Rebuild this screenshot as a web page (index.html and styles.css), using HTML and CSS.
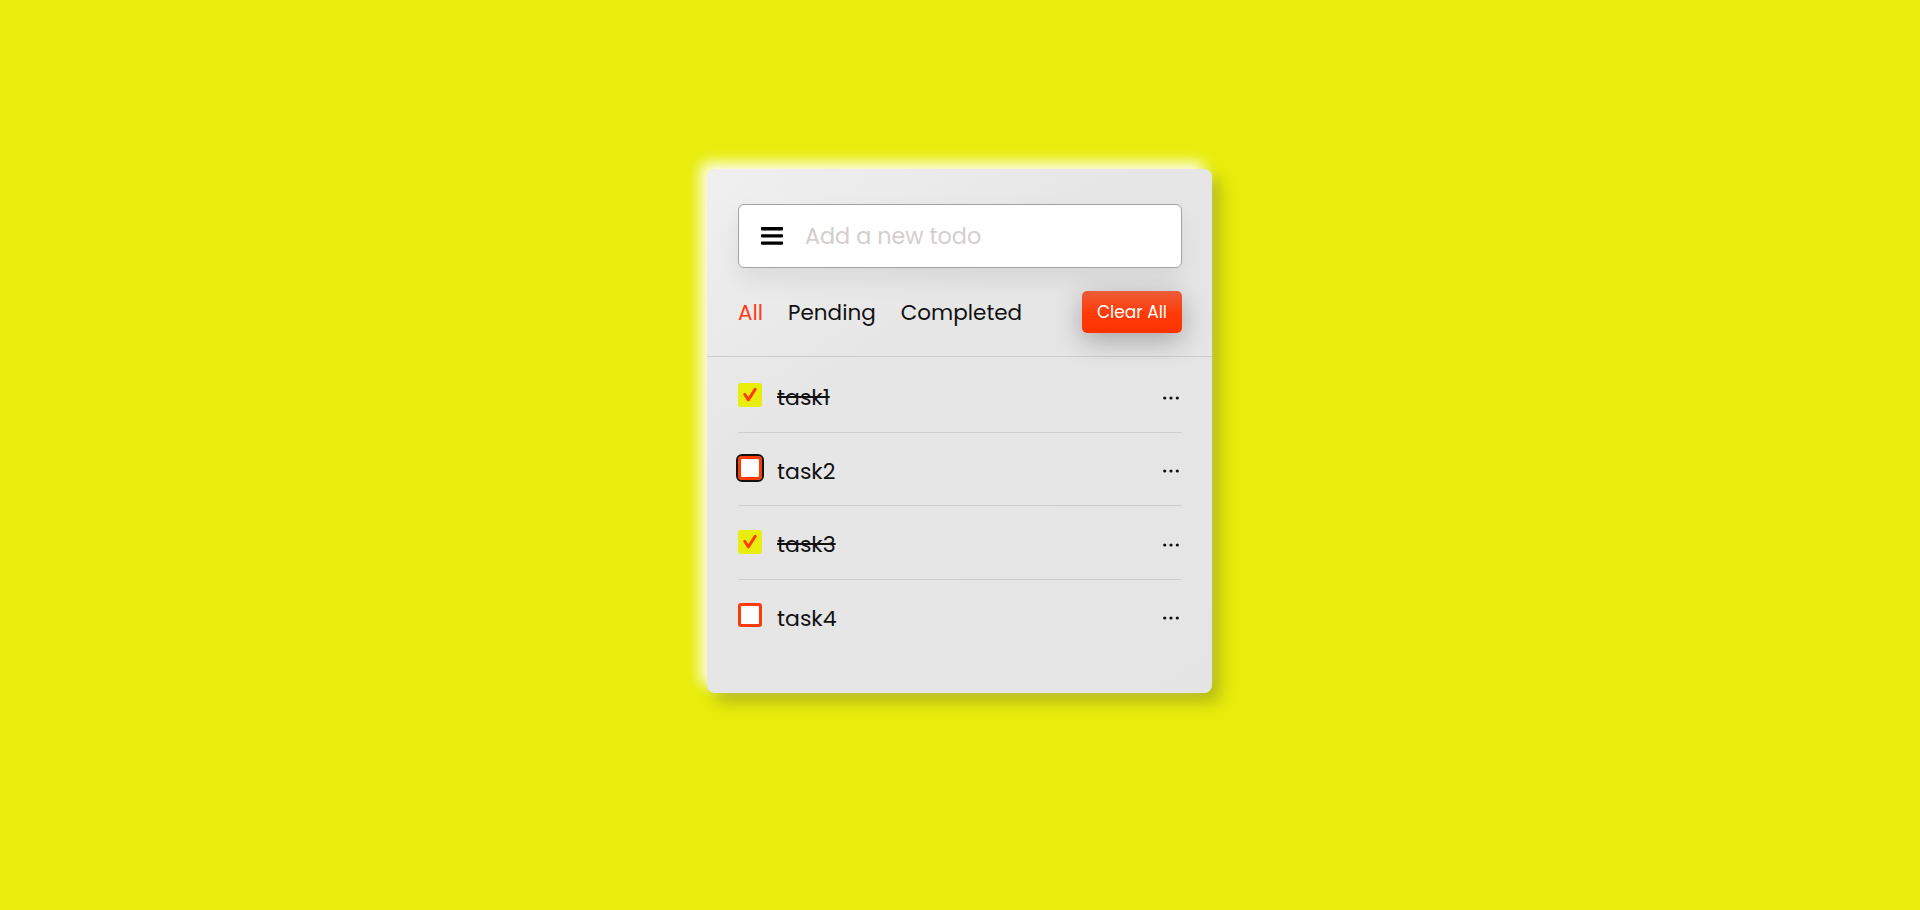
FILE: index.html
```html
<!DOCTYPE html>
<html lang="en">
<head>
<meta charset="utf-8">
<title>Todo App</title>
<link rel="stylesheet" href="styles.css">
</head>
<body>
<div class="card">
  <div class="task-input">
    <svg class="bars" width="22" height="18" viewBox="0 0 22 18" aria-hidden="true">
      <rect x="0" y="0" width="22" height="3.4" rx="0.8"/>
      <rect x="0" y="7.2" width="22" height="3.4" rx="0.8"/>
      <rect x="0" y="14.4" width="22" height="3.4" rx="0.8"/>
    </svg>
    <input type="text" placeholder="Add a new todo">
  </div>
  <div class="controls">
    <div class="filters">
      <span class="filter active">All</span>
      <span class="filter">Pending</span>
      <span class="filter">Completed</span>
    </div>
    <button class="clear-btn">Clear All</button>
  </div>
  <ul class="task-box">
    <li class="task">
      <span class="check checked"><svg width="24" height="24" viewBox="0 0 25 25"><polyline points="7,11.8 10.8,17.6 18,6.4"/></svg></span>
      <span class="name done">task1</span>
      <svg class="dots" width="16" height="4" viewBox="0 0 16 4"><circle cx="1.7" cy="2" r="1.6"/><circle cx="8" cy="2" r="1.6"/><circle cx="14.3" cy="2" r="1.6"/></svg>
    </li>
    <li class="task">
      <span class="check focused"></span>
      <span class="name">task2</span>
      <svg class="dots" width="16" height="4" viewBox="0 0 16 4"><circle cx="1.7" cy="2" r="1.6"/><circle cx="8" cy="2" r="1.6"/><circle cx="14.3" cy="2" r="1.6"/></svg>
    </li>
    <li class="task">
      <span class="check checked"><svg width="24" height="24" viewBox="0 0 25 25"><polyline points="7,11.8 10.8,17.6 18,6.4"/></svg></span>
      <span class="name done">task3</span>
      <svg class="dots" width="16" height="4" viewBox="0 0 16 4"><circle cx="1.7" cy="2" r="1.6"/><circle cx="8" cy="2" r="1.6"/><circle cx="14.3" cy="2" r="1.6"/></svg>
    </li>
    <li class="task">
      <span class="check"></span>
      <span class="name">task4</span>
      <svg class="dots" width="16" height="4" viewBox="0 0 16 4"><circle cx="1.7" cy="2" r="1.6"/><circle cx="8" cy="2" r="1.6"/><circle cx="14.3" cy="2" r="1.6"/></svg>
    </li>
  </ul>
</div>
</body>
</html>
```
FILE: styles.css
```css
* {
  box-sizing: border-box;
}

html, body {
  margin: 0;
  padding: 0;
}

body {
  min-height: 910px;
  background: #e8ed0b;
  padding-top: 169px;
  font-family: "Poppins", "Open Sans", sans-serif;
  color: #111;
}

.card {
  width: 505px;
  margin: 0 auto 0 707px;
  padding: 35px 0 41px;
  border-radius: 8px;
  background: linear-gradient(145deg, #f0f0f0 0%, #e6e6e6 35%, #e5e5e5 100%);
  box-shadow: -7px -7px 14px rgba(255, 255, 255, 0.9), 8px 9px 16px rgba(60, 60, 50, 0.3);
}

.task-input {
  margin: 0 30px 0 31px;
  height: 64px;
  display: flex;
  align-items: center;
  background: #fff;
  border: 1px solid #a2a2a2;
  border-radius: 6px;
  padding-left: 22px;
  box-shadow: 0 12px 24px rgba(0, 0, 0, 0.07);
}

.bars {
  fill: #000;
  flex: none;
}

.task-input input {
  flex: 1;
  min-width: 0;
  border: none;
  outline: none;
  background: transparent;
  margin-left: 22px;
  font-family: inherit;
  font-size: 22.3px;
  color: #111;
  padding: 0;
}

.task-input input::placeholder {
  color: #d4cece;
}

.controls {
  display: flex;
  align-items: center;
  padding: 23px 30px 23px 31px;
  border-bottom: 1px solid #cdcdcd;
}

.filters {
  display: flex;
  align-items: center;
  gap: 25px;
  padding-top: 1px;
}

.filter {
  font-size: 21.5px;
  color: #111;
  line-height: 1;
}

.filter.active {
  color: #ff3d17;
}

.clear-btn {
  margin-left: auto;
  width: 100px;
  height: 42px;
  border: none;
  border-radius: 5px;
  background: linear-gradient(180deg, #ec5d3a 0%, #ff3a06 55%, #ff3300 100%);
  color: #fff;
  font-family: inherit;
  font-size: 17px;
  font-weight: 400;
  box-shadow: 0 8px 28px rgba(0, 0, 0, 0.28);
  padding: 0;
}

.task-box {
  list-style: none;
  margin: 0;
  padding: 2px 30px 0 31px;
}

.task {
  display: flex;
  align-items: center;
  padding: 20px 0 21.5px;
  border-bottom: 1px solid #cdcdcd;
}

.task:last-child {
  border-bottom: none;
}

.check {
  flex: none;
  width: 24px;
  height: 24px;
  border-radius: 3px;
  background: #fff;
  border: 3px solid #ff3a06;
  display: flex;
}

.check.checked {
  background: #e8ed0b;
  border: none;
}

.check svg polyline {
  fill: none;
  stroke: #ff3a06;
  stroke-width: 3;
  stroke-linecap: round;
  stroke-linejoin: round;
}

.check.focused {
  outline: 2px solid #111;
  border-radius: 4px;
}

.name {
  flex: 1;
  margin: 6px 0 0 15px;
  font-size: 22px;
  line-height: 25px;
  color: #111;
}

.name.done {
  text-decoration: line-through;
  text-decoration-thickness: 2px;
}

.dots {
  flex: none;
  fill: #111;
  margin: 6px 3px 0 0;
}
```
